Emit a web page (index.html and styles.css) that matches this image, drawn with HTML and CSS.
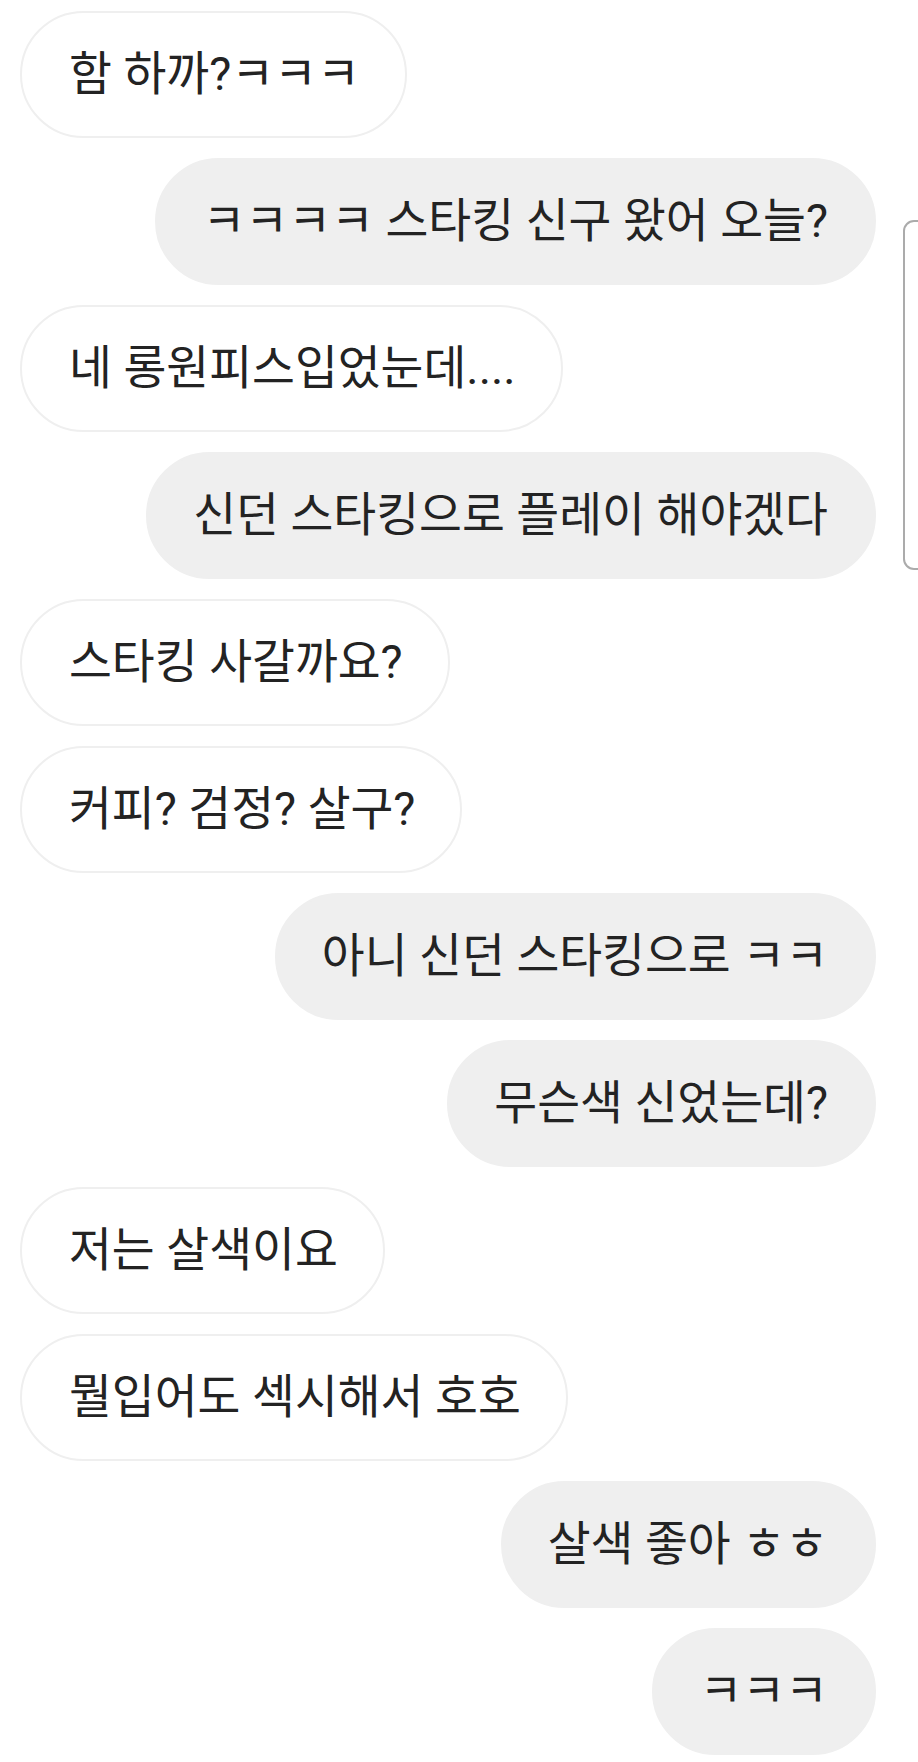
FILE: index.html
```html
<!DOCTYPE html>
<html lang="ko">
<head>
<meta charset="utf-8">
<link rel="stylesheet" href="styles.css">
</head>
<body>
<div class="chat">
  <div class="bubble recv">함 하까?ㅋㅋㅋ</div>
  <div class="bubble sent">ㅋㅋㅋㅋ 스타킹 신구 왔어 오늘?</div>
  <div class="bubble recv">네 롱원피스입었눈데....</div>
  <div class="bubble sent">신던 스타킹으로 플레이 해야겠다</div>
  <div class="bubble recv">스타킹 사갈까요?</div>
  <div class="bubble recv">커피? 검정? 살구?</div>
  <div class="bubble sent">아니 신던 스타킹으로 ㅋㅋ</div>
  <div class="bubble sent">무슨색 신었는데?</div>
  <div class="bubble recv">저는 살색이요</div>
  <div class="bubble recv">뭘입어도 섹시해서 호호</div>
  <div class="bubble sent">살색 좋아 ㅎㅎ</div>
  <div class="bubble sent">ㅋㅋㅋ</div>
</div>
<div class="edge-handle"></div>
</body>
</html>
```
FILE: styles.css
```css
html, body {
  margin: 0;
  padding: 0;
  background: #ffffff;
}
body {
  width: 918px;
  height: 1762px;
  overflow: hidden;
  position: relative;
  font-family: Roboto, "Noto Sans CJK KR", sans-serif;
  color: #232323;
}
.chat {
  display: flex;
  flex-direction: column;
  gap: 20px;
  padding: 11px 42px 0 20px;
}
.bubble {
  box-sizing: border-box;
  height: 127px;
  display: flex;
  align-items: center;
  padding: 0 45px 0 47px;
  border: 2px solid #efefef;
  border-radius: 64px;
  font-size: 46.6px;
  line-height: 1;
  white-space: nowrap;
}
.recv {
  align-self: flex-start;
  background: #ffffff;
}
.sent {
  align-self: flex-end;
  background: #efefef;
  padding: 0 46px 0 45px;
}
.edge-handle {
  position: absolute;
  left: 903px;
  top: 220px;
  width: 40px;
  height: 350px;
  box-sizing: border-box;
  border: 2px solid #ababab;
  border-radius: 11px;
}
```
